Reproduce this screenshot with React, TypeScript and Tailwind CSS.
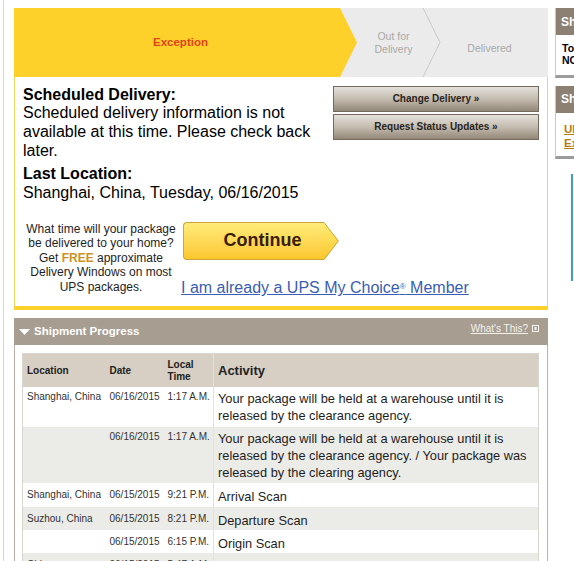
import React from 'react';

type Row = {
  loc: string;
  date: string;
  time: string;
  activity: string;
  height: string;
  shaded: boolean;
  single: boolean;
  faded?: boolean;
};

const rows: Row[] = [
  {
    loc: 'Shanghai, China',
    date: '06/16/2015',
    time: '1:17 A.M.',
    activity: 'Your package will be held at a warehouse until it is released by the clearance agency.',
    height: 'h-[40px]',
    shaded: false,
    single: false,
  },
  {
    loc: '',
    date: '06/16/2015',
    time: '1:17 A.M.',
    activity:
      'Your package will be held at a warehouse until it is released by the clearance agency. / Your package was released by the clearing agency.',
    height: 'h-[56px]',
    shaded: true,
    single: false,
  },
  { loc: 'Shanghai, China', date: '06/15/2015', time: '9:21 P.M.', activity: 'Arrival Scan', height: 'h-[24px]', shaded: false, single: true },
  { loc: 'Suzhou, China', date: '06/15/2015', time: '8:21 P.M.', activity: 'Departure Scan', height: 'h-[23px]', shaded: true, single: true },
  { loc: '', date: '06/15/2015', time: '6:15 P.M.', activity: 'Origin Scan', height: 'h-[23px]', shaded: false, single: true },
  {
    loc: 'China',
    date: '06/15/2015',
    time: '5:47 A.M.',
    activity: 'Order Processed: Ready for UPS',
    height: 'h-[23px]',
    shaded: true,
    single: true,
    faded: true,
  },
];

function ActionButton({ label }: { label: string }) {
  return (
    <button className="flex h-[26px] w-full items-center justify-center border border-[#73695c] bg-linear-to-b from-[#e4e0da] via-[#c4bcb0] to-[#938878] text-[10px] font-bold text-[#2a2520]">
      {label}
    </button>
  );
}

function ContinueButton() {
  return (
    <div className="ml-[2px] flex h-[38px]">
      <div className="flex w-[140px] items-center justify-center rounded-l-[4px] border-y border-l border-[#cda43d] bg-linear-to-b from-[#ffec78] to-[#fbc72a] pl-[18px] text-[18px] font-bold text-[#3a1c02]">
        Continue
      </div>
      <svg width="16" height="38" viewBox="0 0 16 38" className="shrink-0">
        <defs>
          <linearGradient id="tip" x1="0" y1="0" x2="0" y2="1">
            <stop offset="0" stopColor="#ffec78" />
            <stop offset="1" stopColor="#fbc72a" />
          </linearGradient>
        </defs>
        <polygon points="0,0 1,0 15.5,19 1,38 0,38" fill="url(#tip)" />
        <polyline points="0,0.5 1,0.5 15.3,19 1,37.5 0,37.5" fill="none" stroke="#cda43d" strokeWidth="1" />
      </svg>
    </div>
  );
}

function SideBox({ title, children, bodyHeight }: { title: string; children: React.ReactNode; bodyHeight: string }) {
  return (
    <div className="border-b-[3px] border-l border-b-[#9c9c9c] border-l-[#c8c8c8]">
      <div className="flex h-[27px] items-center whitespace-nowrap bg-[#8b8072] pl-[5px] text-[12px] font-bold text-white">
        {title}
      </div>
      <div className={`${bodyHeight} bg-white`}>{children}</div>
    </div>
  );
}

export default function App() {
  return (
    <div className="flex h-[561px] w-[574px] overflow-hidden bg-white font-['Liberation_Sans',Arial,sans-serif] text-black">
      <div className="ml-[3px] w-px shrink-0 bg-[#d6d6d6]" />

      <main className="ml-[10px] mt-[8px] w-[534px] shrink-0">
        {/* Progress bar */}
        <div className="flex h-[69px] bg-[#ebebeb]">
          <div className="flex w-[343px] items-center justify-center bg-[#fdd02a] pr-[10px] text-[11.5px] font-bold text-[#e2431b] [clip-path:polygon(0_0,calc(100%_-_17px)_0,100%_50%,calc(100%_-_17px)_100%,0_100%)]">
            Exception
          </div>
          <div className="flex w-[65px] items-center justify-center pl-[8px] text-center text-[10.5px] leading-[13px] text-[#a9a9a9]">
            Out for
            <br />
            Delivery
          </div>
          <svg width="19" height="69" viewBox="0 0 19 69" className="shrink-0">
            <polyline points="1,0 18,34.5 1,69" fill="none" stroke="#c9c9c9" strokeWidth="1" />
          </svg>
          <div className="flex flex-1 items-center justify-center pr-[10px] pt-[12px] text-[10.5px] text-[#a9a9a9]">Delivered</div>
        </div>

        {/* Delivery details */}
        <div className="border-x border-b-4 border-x-[#f2d35c] border-b-[#fcd12a] pb-[8.5px] pl-[8px] pr-[8px] pt-[8.5px]">
          <div className="flex">
            <div className="flex-1 text-[16px] leading-[18.7px]">
              <p className="font-bold">Scheduled Delivery:</p>
              <p>Scheduled delivery information is not available at this time. Please check back later.</p>
              <p className="mt-[4.5px] font-bold">Last Location:</p>
              <p>Shanghai, China, Tuesday, 06/16/2015</p>
            </div>
            <div className="flex w-[206px] flex-col gap-[2px]">
              <ActionButton label="Change Delivery »" />
              <ActionButton label="Request Status Updates »" />
            </div>
          </div>

          <div className="mt-[19.5px] flex items-start">
            <p className="w-[156px] text-center text-[12px] leading-[14.5px] text-[#1e1e1e]">
              What time will your package be delivered to your home? Get{' '}
              <span className="font-bold text-[#cc931f]">FREE</span> approximate Delivery Windows on most UPS packages.
            </p>
            <div className="ml-[2px] flex flex-col">
              <ContinueButton />
              <a className="mt-[19.5px] whitespace-nowrap text-[16px] leading-[18.7px] text-[#3b5db3] underline">
                I am already a UPS My Choice<sup className="text-[8px] leading-none">®</sup> Member
              </a>
            </div>
          </div>
        </div>

        {/* Shipment progress */}
        <section className="mt-[8px]">
          <div className="flex h-[27px] items-center bg-[#a79d90] pl-[5px] pr-[9px]">
            <svg width="11" height="6" viewBox="0 0 11 6" className="shrink-0">
              <polygon points="0,0 11,0 5.5,6" fill="#ffffff" />
            </svg>
            <span className="ml-[4px] text-[11.5px] font-bold text-white">Shipment Progress</span>
            <span className="mb-[7px] ml-auto text-[10px] text-[#f5f2ec] underline">What&apos;s This?</span>
            <svg width="7" height="7" viewBox="0 0 7 7" className="mb-[7px] ml-[4px] shrink-0">
              <rect x="0.5" y="0.5" width="6" height="6" fill="none" stroke="#f5f2ec" strokeWidth="1" />
              <rect x="2.5" y="2" width="2" height="3" fill="#f5f2ec" />
            </svg>
          </div>
          <div className="border-x border-[#b9b1a5] pl-[7px] pr-[8px] pt-[8px]">
            <table className="w-full table-fixed border-collapse border border-[#d9d6d0]">
              <colgroup>
                <col className="w-[82px]" />
                <col className="w-[59px]" />
                <col className="w-[50px]" />
                <col />
              </colgroup>
              <thead>
                <tr className="h-[33px] bg-[#d7cfc4] text-left font-bold text-[#222]">
                  <th className="pl-[4px] align-middle text-[10px]">Location</th>
                  <th className="pl-[5px] align-middle text-[10px]">Date</th>
                  <th className="pl-[4px] align-middle text-[10px] leading-[12px]">
                    Local
                    <br />
                    Time
                  </th>
                  <th className="border-l border-[#e6e0d7] pl-[4px] align-middle text-[13px]">Activity</th>
                </tr>
              </thead>
              <tbody>
                {rows.map((r, i) => {
                  const small = `align-top text-[10px] leading-[12px] text-[#333] ${r.single ? 'pt-[6.5px]' : 'pt-[4px]'}`;
                  return (
                    <tr key={i} className={`${r.height} ${r.shaded ? 'bg-[#ebebe8]' : 'bg-white'}`}>
                      <td className={`pl-[4px] whitespace-nowrap ${small}`}>{r.loc}</td>
                      <td className={`pl-[5px] ${small}`}>{r.date}</td>
                      <td className={`pl-[4px] whitespace-nowrap ${small}`}>{r.time}</td>
                      <td
                        className={`border-l border-[#e3e1dc] pl-[4px] pr-[4px] align-top text-[12.8px] leading-[17px] ${
                          r.single ? 'pt-[5px]' : 'pt-[3px]'
                        } ${r.faded ? 'text-[#9a9a9a]' : 'text-[#1e1e1e]'}`}
                      >
                        {r.activity}
                      </td>
                    </tr>
                  );
                })}
              </tbody>
            </table>
          </div>
        </section>
      </main>

      {/* Right column */}
      <aside className="ml-[7px] mt-[8px] w-[150px] shrink-0">
        <SideBox title="Shipping Information" bodyHeight="h-[40px]">
          <div className="pl-[6px] pt-[7px] text-[10.5px] font-bold leading-[12px] text-black">
            <p className="whitespace-nowrap">To:</p>
            <p className="whitespace-nowrap">NORWAY</p>
          </div>
        </SideBox>
        <div className="mt-[7.5px]">
          <SideBox title="Shipment Options" bodyHeight="h-[43px]">
            <div className="pl-[8px] pt-[9px] text-[11.5px] font-bold leading-[14px] text-[#b47d12]">
              <p className="whitespace-nowrap underline">UPS My Choice</p>
              <p className="whitespace-nowrap underline">Exceptions</p>
            </div>
          </SideBox>
        </div>
        <div className="ml-[16px] mt-[15px] h-[107px] border-l-2 border-[#3e9fbf]" />
      </aside>
    </div>
  );
}
